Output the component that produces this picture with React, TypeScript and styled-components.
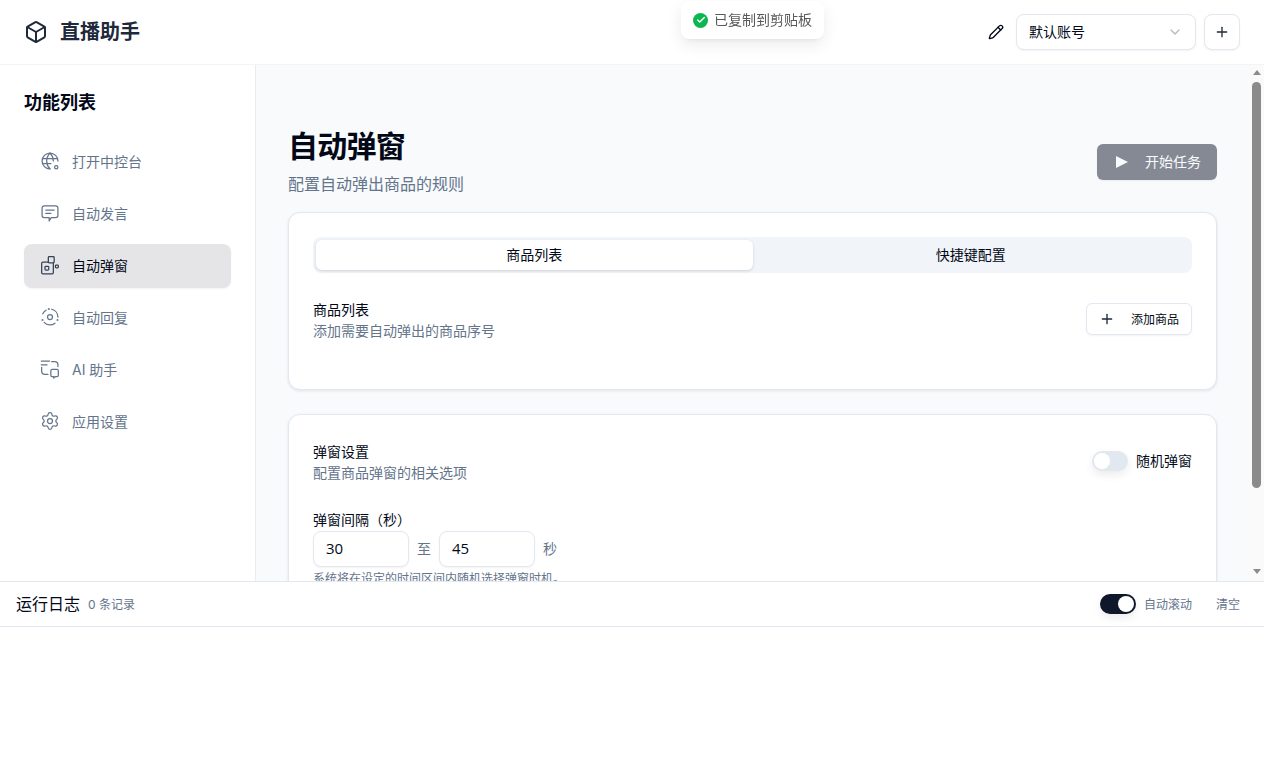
import styled, { createGlobalStyle } from "styled-components";
import { Box, ChevronDown, Pencil, Plus, Settings, Check } from "lucide-react";
import type { ReactNode } from "react";

const GlobalStyle = createGlobalStyle`
  html, body {
    margin: 0;
    padding: 0;
    height: 100%;
    overflow: hidden;
    background: #fff;
    color: #020817;
    font-family: Inter, "Noto Sans CJK SC", sans-serif;
    font-size: 14px;
  }
  * { box-sizing: border-box; }
`;

const GlobeDotIcon = () => (
  <NavSvg viewBox="0 0 24 24">
    <path d="M21.5 12a9.5 9.5 0 1 0-9.5 9.5" />
    <path d="M12 2.500C9.500 5 8 8.400 8 12s1.500 7 4 9.500" />
    <path d="M12 2.500c2.500 2.500 4 5.900 4 9.500" />
    <path d="M3 9h18" />
    <path d="M3 15h10" />
    <circle cx="19.500" cy="19.500" r="2" />
  </NavSvg>
);

const ChatIcon = () => (
  <NavSvg viewBox="0 0 24 24">
    <path d="M5 3.500h14a2.500 2.500 0 0 1 2.500 2.500v9a2.500 2.500 0 0 1-2.500 2.500h-5.500L11 21.500v-4H5A2.500 2.500 0 0 1 2.500 15V6A2.500 2.500 0 0 1 5 3.500Z" />
    <path d="M7 8.500h10" />
    <path d="M7 12.500h6" />
  </NavSvg>
);

const PopupIcon = () => (
  <NavSvg viewBox="0 0 24 24">
    <path d="M10 8.500H3.500A1.500 1.500 0 0 0 2 10v11a1.500 1.500 0 0 0 1.500 1.500h11A1.500 1.500 0 0 0 16 21v-11.500" />
    <rect x="10" y="2" width="7" height="7.500" rx="1" />
    <rect x="6" y="13.500" width="4.500" height="4.500" rx="1" />
    <rect x="18.500" y="12" width="3.500" height="3.500" rx="1" />
  </NavSvg>
);

const OrbitDotsIcon = () => (
  <NavSvg viewBox="0 0 24 24">
    <circle cx="12" cy="12" r="3" />
    <path d="M3.300 8.200A9.500 9.500 0 0 1 7.200 3.800" />
    <path d="M14 2.700A9.500 9.500 0 0 1 21.500 12" />
    <path d="M5 18.500A9.500 9.500 0 0 0 18 19.400" />
    <circle cx="10.500" cy="2.300" r="0.500" />
    <circle cx="3" cy="15.500" r="0.500" />
    <circle cx="21" cy="15.500" r="0.500" />
  </NavSvg>
);

const AiIcon = () => (
  <NavSvg viewBox="0 0 24 24">
    <path d="M1.500 2.500h10" />
    <path d="M1.500 7h7" />
    <path d="M14 3h3.500a4 4 0 0 1 4 4v2" />
    <path d="M2 10v4.500a4 4 0 0 0 4 4h3.500" />
    <path d="M14.500 12.500h6a1.500 1.500 0 0 1 1.500 1.500v5.500a1.500 1.500 0 0 1-1.500 1.500h-2l-2 2v-2h-2a1.500 1.500 0 0 1-1.500-1.500V14a1.500 1.500 0 0 1 1.500-1.500Z" />
  </NavSvg>
);

const navItems: { label: string; icon: ReactNode; active?: boolean }[] = [
  { label: "打开中控台", icon: <GlobeDotIcon /> },
  { label: "自动发言", icon: <ChatIcon /> },
  { label: "自动弹窗", icon: <PopupIcon />, active: true },
  { label: "自动回复", icon: <OrbitDotsIcon /> },
  { label: "AI 助手", icon: <AiIcon /> },
  { label: "应用设置", icon: <Settings size={20} strokeWidth={1.5} /> },
];

const App = () => {
  return (
    <Page>
      <GlobalStyle />
      <Header>
        <Brand>
          <Box size={24} strokeWidth={2} color="#1e293b" />
          <BrandName>直播助手</BrandName>
        </Brand>
        <HeaderActions>
          <Pencil size={16} strokeWidth={2} color="#020817" />
          <AccountSelect>
            <RaisedText>默认账号</RaisedText>
            <ChevronDown size={16} strokeWidth={2} color="#b4bac4" />
          </AccountSelect>
          <SquareButton>
            <Plus size={16} strokeWidth={2} color="#1e293b" />
          </SquareButton>
        </HeaderActions>
      </Header>

      <Toast>
        <ToastCheck>
          <Check size={10} strokeWidth={3.5} color="#fff" />
        </ToastCheck>
        <RaisedText>已复制到剪贴板</RaisedText>
      </Toast>

      <Body>
        <Sidebar>
          <SidebarTitle>功能列表</SidebarTitle>
          <NavList>
            {navItems.map((item) => (
              <NavItem key={item.label} $active={item.active}>
                {item.icon}
                {item.label}
              </NavItem>
            ))}
          </NavList>
        </Sidebar>

        <MainWrap>
          <Main>
            <PageHead>
              <div>
                <PageTitle>自动弹窗</PageTitle>
                <PageSub>配置自动弹出商品的规则</PageSub>
              </div>
              <StartButton>
                <PlayGlyph viewBox="0 0 12 12">
                  <polygon points="0,0 12,6 0,12" fill="#f8fafc" />
                </PlayGlyph>
                <RaisedText>开始任务</RaisedText>
              </StartButton>
            </PageHead>

            <Card>
              <Tabs>
                <Tab $active>商品列表</Tab>
                <Tab>快捷键配置</Tab>
              </Tabs>
              <SectionRow>
                <div>
                  <SectionTitle>商品列表</SectionTitle>
                  <Muted>添加需要自动弹出的商品序号</Muted>
                </div>
                <AddButton>
                  <Plus size={16} strokeWidth={2} color="#1e293b" />
                  <RaisedText>添加商品</RaisedText>
                </AddButton>
              </SectionRow>
            </Card>

            <Card>
              <SettingsRow>
                <div>
                  <SectionTitle>弹窗设置</SectionTitle>
                  <Muted>配置商品弹窗的相关选项</Muted>
                </div>
                <ToggleLabel>
                  <Toggle />
                  <RaisedText>随机弹窗</RaisedText>
                </ToggleLabel>
              </SettingsRow>
              <FieldLabel>弹窗间隔（秒）</FieldLabel>
              <IntervalRow>
                <NumberBox>30</NumberBox>
                <Unit>至</Unit>
                <NumberBox>45</NumberBox>
                <Unit>秒</Unit>
              </IntervalRow>
              <Hint>系统将在设定的时间区间内随机选择弹窗时机。</Hint>
            </Card>
          </Main>
          <ScrollRail>
            <ArrowUp />
            <ScrollThumb />
            <ArrowDown />
          </ScrollRail>
        </MainWrap>
      </Body>

      <LogPanel>
        <LogHead>
          <LogTitle>运行日志</LogTitle>
          <LogCount>0 条记录</LogCount>
          <LogActions>
            <LogToggle>
              <Toggle $on />
              <RaisedText>自动滚动</RaisedText>
            </LogToggle>
            <ClearButton>清空</ClearButton>
          </LogActions>
        </LogHead>
      </LogPanel>
    </Page>
  );
};

export default App;

const Page = styled.div`
  position: relative;
  display: flex;
  flex-direction: column;
  height: 761px;
  overflow: hidden;
`;

const RaisedText = styled.span`
  padding-bottom: 2px;
`;

const Header = styled.header`
  display: flex;
  align-items: center;
  justify-content: space-between;
  flex: none;
  height: 65px;
  padding: 0 24px;
  border-bottom: 1px solid #f3f4f7;
`;

const Brand = styled.div`
  display: flex;
  align-items: center;
  gap: 12px;
`;

const BrandName = styled.span`
  font-size: 20px;
  line-height: 28px;
  font-weight: 700;
  color: #1e293b;
`;

const HeaderActions = styled.div`
  display: flex;
  align-items: center;
  gap: 8px;
`;

const AccountSelect = styled.div`
  display: flex;
  align-items: center;
  justify-content: space-between;
  width: 180px;
  height: 36px;
  margin-left: 4px;
  padding: 0 12px;
  background: #fff;
  border: 1px solid #e2e8f0;
  border-radius: 8px;
  box-shadow: 0 1px 2px rgba(0, 0, 0, 0.05);
`;

const SquareButton = styled.div`
  display: flex;
  align-items: center;
  justify-content: center;
  width: 36px;
  height: 36px;
  background: #fff;
  border: 1px solid #e2e8f0;
  border-radius: 8px;
  box-shadow: 0 1px 2px rgba(0, 0, 0, 0.05);
`;

const Toast = styled.div`
  position: absolute;
  top: 1px;
  left: 681px;
  display: flex;
  align-items: center;
  gap: 6px;
  width: 143px;
  height: 38px;
  padding: 0 12px;
  background: #fff;
  border-radius: 8px;
  box-shadow: 0 6px 16px rgba(0, 0, 0, 0.08), 0 3px 6px -4px rgba(0, 0, 0, 0.12);
  color: #595959;
  z-index: 5;
`;

const ToastCheck = styled.span`
  display: flex;
  align-items: center;
  justify-content: center;
  width: 15px;
  height: 15px;
  border-radius: 50%;
  background: #0cb650;
`;

const Body = styled.div`
  display: flex;
  flex: 1;
  min-height: 0;
`;

const Sidebar = styled.aside`
  flex: none;
  width: 256px;
  padding: 24px 24px 0;
  border-right: 1px solid #e8ebf0;
`;

const SidebarTitle = styled.h2`
  margin: 0;
  font-size: 18px;
  line-height: 28px;
  font-weight: 700;
  color: #020817;
`;

const NavList = styled.nav`
  display: flex;
  flex-direction: column;
  gap: 8px;
  margin-top: 23px;
  width: 207px;
`;

const NavItem = styled.div<{ $active?: boolean }>`
  display: flex;
  align-items: center;
  gap: 12px;
  height: 44px;
  padding: 0 16px 2px;
  border-radius: 8px;
  color: ${({ $active }) => ($active ? "#020817" : "#64748b")};
  background: ${({ $active }) => ($active ? "#e5e5e8" : "transparent")};
  box-shadow: ${({ $active }) => ($active ? "0 1px 2px rgba(0, 0, 0, 0.05)" : "none")};

  svg {
    flex: none;
    color: ${({ $active }) => ($active ? "#334155" : "#64748b")};
  }
`;

const NavSvg = styled.svg`
  width: 20px;
  height: 20px;
  fill: none;
  stroke: currentColor;
  stroke-width: 1.5;
  stroke-linecap: round;
  stroke-linejoin: round;
`;

const MainWrap = styled.div`
  position: relative;
  flex: 1;
  min-width: 0;
`;

const Main = styled.main`
  height: 100%;
  padding: 63px 47px 0 32px;
  background: #f8fafc;
  overflow-y: auto;
`;

const ScrollRail = styled.div`
  position: absolute;
  top: 0;
  right: 0;
  bottom: 0;
  display: flex;
  flex-direction: column;
  align-items: center;
  width: 15px;
  padding: 5px 0 7px;
  background: #fafafa;
`;

const ArrowUp = styled.span`
  flex: none;
  border-left: 4.5px solid transparent;
  border-right: 4.5px solid transparent;
  border-bottom: 5px solid #8b8b8b;
`;

const ArrowDown = styled.span`
  flex: none;
  margin-top: auto;
  border-left: 4.5px solid transparent;
  border-right: 4.5px solid transparent;
  border-top: 5px solid #8b8b8b;
`;

const ScrollThumb = styled.div`
  flex: none;
  width: 9px;
  height: 406px;
  margin-top: 7px;
  background: #8b8b8b;
  border-radius: 5px;
`;

const PageHead = styled.div`
  display: flex;
  align-items: center;
  justify-content: space-between;
  margin-bottom: 16px;
`;

const PageTitle = styled.h1`
  margin: 0;
  font-size: 30px;
  line-height: 36px;
  font-weight: 700;
  letter-spacing: -0.75px;
  color: #020817;
`;

const PageSub = styled.p`
  margin: 8px 0 0;
  font-size: 16px;
  line-height: 24px;
  color: #64748b;
`;

const StartButton = styled.div`
  display: flex;
  align-items: center;
  justify-content: space-between;
  width: 120px;
  height: 36px;
  padding: 0 16px 0 19px;
  background: #858994;
  border-radius: 6px;
  color: #f8fafc;
  box-shadow: 0 1px 2px rgba(0, 0, 0, 0.05);
`;

const PlayGlyph = styled.svg`
  flex: none;
  width: 12px;
  height: 12px;
`;

const Card = styled.section`
  margin-bottom: 24px;
  padding: 24px;
  background: #fff;
  border: 1px solid #e2e8f0;
  border-radius: 12px;
  box-shadow: 0 1px 3px rgba(15, 23, 42, 0.1);
`;

const Tabs = styled.div`
  display: grid;
  grid-template-columns: 1fr 1fr;
  height: 36px;
  padding: 3px;
  background: #f1f5f9;
  border-radius: 8px;
`;

const Tab = styled.div<{ $active?: boolean }>`
  display: flex;
  align-items: center;
  justify-content: center;
  height: 30px;
  padding-bottom: 2px;
  border-radius: 6px;
  color: #020817;
  background: ${({ $active }) => ($active ? "#fff" : "transparent")};
  box-shadow: ${({ $active }) => ($active ? "0 1px 3px rgba(0, 0, 0, 0.15)" : "none")};
`;

const SectionRow = styled.div`
  display: flex;
  align-items: flex-start;
  justify-content: space-between;
  margin-top: 27px;
  min-height: 65px;
`;

const SectionTitle = styled.div`
  font-size: 14px;
  line-height: 20px;
  color: #020817;
`;

const Muted = styled.div`
  margin-top: 1px;
  font-size: 14px;
  line-height: 20px;
  color: #64748b;
`;

const AddButton = styled.div`
  display: flex;
  align-items: center;
  justify-content: space-between;
  width: 106px;
  height: 32px;
  margin-top: 3px;
  padding: 0 12px;
  background: #fff;
  border: 1px solid #e2e8f0;
  border-radius: 6px;
  font-size: 12px;
  color: #020817;
  box-shadow: 0 1px 2px rgba(0, 0, 0, 0.05);
`;

const SettingsRow = styled.div`
  display: flex;
  align-items: center;
  justify-content: space-between;
  margin-top: 3px;
`;

const ToggleLabel = styled.div`
  display: flex;
  align-items: center;
  gap: 8px;
  margin-bottom: 3px;
  color: #020817;
`;

const Toggle = styled.span<{ $on?: boolean }>`
  display: flex;
  align-items: center;
  justify-content: ${({ $on }) => ($on ? "flex-end" : "flex-start")};
  width: 36px;
  height: 20px;
  padding: 2px;
  border-radius: 10px;
  background: ${({ $on }) => ($on ? "#0f172a" : "#e2e8f0")};
  box-shadow: 0 4px 8px rgba(0, 0, 0, 0.08);

  &::after {
    content: "";
    width: 16px;
    height: 16px;
    border-radius: 50%;
    background: #fff;
  }
`;

const FieldLabel = styled.div`
  margin-top: 27px;
  font-size: 14px;
  line-height: 20px;
  color: #020817;
`;

const IntervalRow = styled.div`
  display: flex;
  align-items: center;
  gap: 8px;
  margin-top: 1px;
`;

const NumberBox = styled.div`
  display: flex;
  align-items: center;
  width: 96px;
  height: 36px;
  padding: 0 12px 2px;
  background: #fff;
  border: 1px solid #e2e8f0;
  border-radius: 8px;
  font-family: "Open Sans", sans-serif;
  font-size: 15px;
  color: #020817;
  box-shadow: 0 1px 2px rgba(0, 0, 0, 0.05);
`;

const Unit = styled.span`
  padding-bottom: 2px;
  color: #64748b;
`;

const Hint = styled.div`
  margin-top: 4px;
  font-size: 12px;
  line-height: 16px;
  color: #64748b;
`;

const LogPanel = styled.section`
  flex: none;
  height: 180px;
  background: #fff;
  border-top: 1px solid #e2e8f0;
`;

const LogHead = styled.div`
  display: flex;
  align-items: center;
  height: 45px;
  padding: 0 24px 0 16px;
  border-bottom: 1px solid #e2e8f0;
`;

const LogTitle = styled.span`
  padding-bottom: 2px;
  font-size: 16px;
  color: #020817;
`;

const LogCount = styled.span`
  margin-left: 8px;
  padding-bottom: 2px;
  font-size: 12px;
  color: #64748b;
`;

const LogActions = styled.div`
  display: flex;
  align-items: center;
  gap: 24px;
  margin-left: auto;
`;

const LogToggle = styled.div`
  display: flex;
  align-items: center;
  gap: 8px;
  font-size: 12px;
  color: #64748b;
`;

const ClearButton = styled.span`
  padding-bottom: 2px;
  font-size: 12px;
  color: #64748b;
`;
